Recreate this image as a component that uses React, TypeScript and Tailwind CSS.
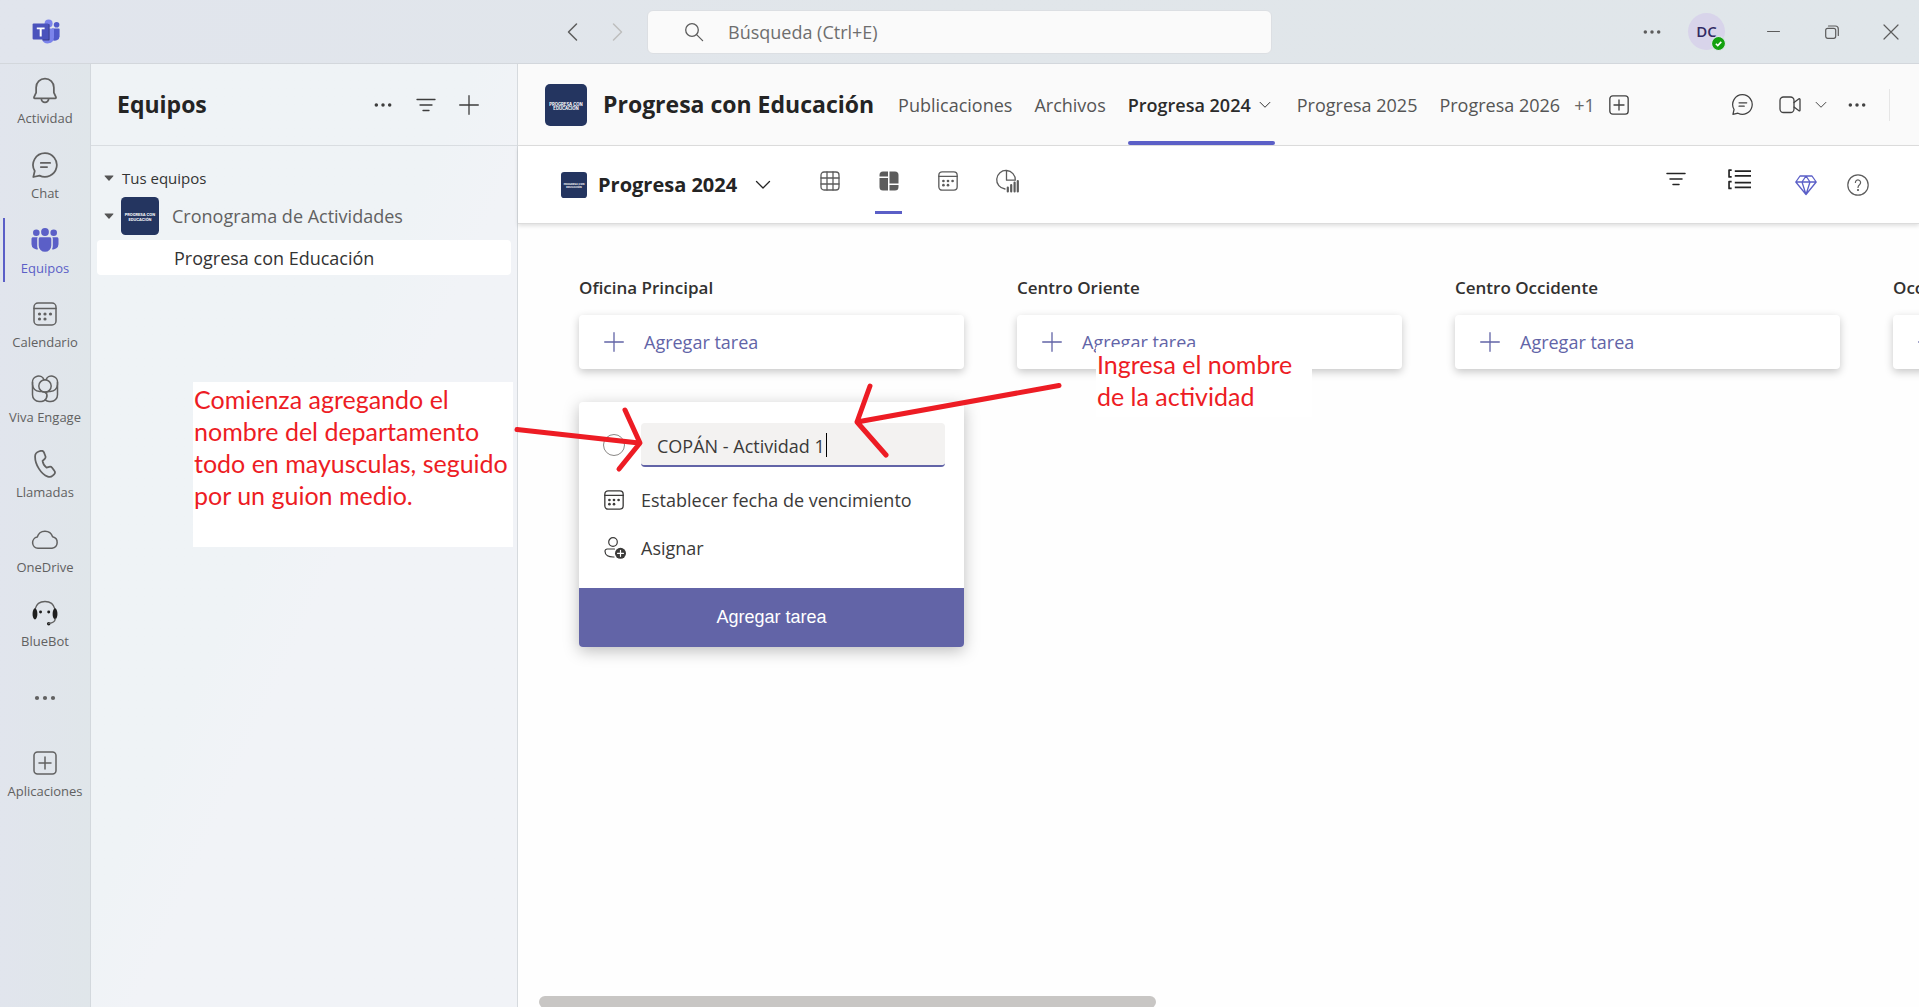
import type { ReactNode } from "react";

type IconProps = { className?: string };

function Svg({ children, box = 24, className = "", w = 1.5 }: { children: ReactNode; box?: number; className?: string; w?: number }) {
  return (
    <svg
      viewBox={`0 0 ${box} ${box}`}
      className={`shrink-0 ${className}`}
      fill="none"
      stroke="currentColor"
      strokeWidth={w}
      strokeLinecap="round"
      strokeLinejoin="round"
      aria-hidden="true"
    >
      {children}
    </svg>
  );
}

function TeamsLogo() {
  return (
    <svg viewBox="0 0 28 26" className="ml-8 h-[26px] w-7 shrink-0" role="img" aria-label="Microsoft Teams">
      <circle cx="24.6" cy="5.8" r="2.8" fill="#5059c9" />
      <path d="M20 9.6h6.6c.6 0 1 .4 1 1v6.6a4.6 4.6 0 0 1-7.6 3.4z" fill="#5059c9" />
      <circle cx="16.6" cy="4.6" r="4" fill="#7b83eb" />
      <path d="M10 9.6h11c.6 0 1 .4 1 1v8a6.2 6.2 0 0 1-12 1.8z" fill="#7b83eb" />
      <path d="M11 5h5.6c.6 0 1 .4 1 1v14.6c0 .6-.4 1-1 1H10.600z" fill="#3b3f8c" />
      <rect x="0.600" y="4.600" width="16" height="16" rx="1" fill="#4b53bc" />
      <path d="M4.800 8.400h7.800v1.800H9.700v7.400H7.700v-7.400H4.800z" fill="#fff" />
    </svg>
  );
}

const Bell = ({ className }: IconProps) => (
  <Svg className={className}>
    <path d="M12 2.200a7.600 7.600 0 0 0-7.600 7.600v4.400l-1.800 4c-.2.500.1 1 .6 1h17.600c.5 0 .8-.5.6-1l-1.800-4V9.800A7.600 7.600 0 0 0 12 2.200z" />
    <path d="M8.900 19.500a3.100 3.100 0 0 0 6.200 0" />
  </Svg>
);

const Chat = ({ className, w }: IconProps & { w?: number }) => (
  <Svg className={className} w={w}>
    <path d="M12 1.800a10.200 10.200 0 1 1-4.700 19.300l-5.300 1.200 1.200-5.100A10.200 10.200 0 0 1 12 1.800z" />
    <path d="M8.400 10.200h8M8.400 13.800h5.400" />
  </Svg>
);

const People = ({ className }: IconProps) => (
  <svg viewBox="0 0 28 24" className={`shrink-0 ${className}`} fill="currentColor" aria-hidden="true">
    <circle cx="14" cy="4" r="3.900" />
    <circle cx="5.300" cy="4.800" r="3.300" />
    <circle cx="22.700" cy="4.800" r="3.300" />
    <path d="M9.300 9.300h9.400c.9 0 1.600.7 1.600 1.600v6.600a6.300 6.300 0 0 1-12.600 0v-6.600c0-.9.700-1.600 1.600-1.600z" />
    <path d="M2.100 9.300h4.600a3 3 0 0 0-.5 1.600v7c0 1.200.3 2.400.9 3.400A5.400 5.400 0 0 1 .5 16.200v-5.300c0-.9.700-1.600 1.600-1.600z" />
    <path d="M25.900 9.300h-4.600c.3.500.5 1 .5 1.600v7c0 1.200-.3 2.400-.9 3.400a5.400 5.400 0 0 0 6.600-5.100v-5.300c0-.9-.7-1.600-1.600-1.600z" />
  </svg>
);

const Calendar = ({ className, w }: IconProps & { w?: number }) => (
  <Svg className={className} w={w}>
    <rect x="1" y="1" width="22" height="22" rx="4" />
    <path d="M1 6.500h22" />
    <g fill="currentColor" stroke="none">
      <circle cx="6.500" cy="12" r="1.600" />
      <circle cx="12" cy="12" r="1.600" />
      <circle cx="17.500" cy="12" r="1.600" />
      <circle cx="6.500" cy="17" r="1.600" />
      <circle cx="12" cy="17" r="1.600" />
    </g>
  </Svg>
);

const Viva = ({ className }: IconProps) => (
  <Svg className={className} box={28}>
    <circle cx="14" cy="11" r="6.200" />
    <path d="M1.500 8.500V7.500a6 6 0 0 1 11.600-2.600" />
    <path d="M26.500 8.500V7.500a6 6 0 0 0-11.600-2.600" />
    <path d="M1.500 7.500v12.300a6.600 6.600 0 0 0 6.600 6.700h1.700a5.800 5.800 0 0 0 5-9.300" />
    <path d="M26.500 7.500v12.300a6.600 6.600 0 0 1-6.600 6.700h-1.700a5.600 5.600 0 0 1-4-1.600" />
    <path d="M1.500 9.500c.3 4 3.300 6.600 7.300 6.900 2.800.2 4.700-.2 6 1.600" />
    <path d="M26.500 9.500c-.3 4-3.300 6.600-7.300 6.900-1.500.1-3 .1-4.300.6" />
  </Svg>
);

const Phone = ({ className }: IconProps) => (
  <Svg className={className}>
    <path d="M6.600 1.300 8.300.8a2.300 2.300 0 0 1 2.800 1.300l1.200 3a2.300 2.300 0 0 1-.6 2.600L9.900 9.300c.3 2 1.800 4.600 3.400 5.800l2.300-.7a2.300 2.300 0 0 1 2.500.8l1.900 2.600c.7.900.6 2.200-.2 3l-1.200 1.200a4 4 0 0 1-4.200.8C8.500 20.700 3.500 12.300 3.500 5.700a4.600 4.600 0 0 1 3.100-4.400z" />
  </Svg>
);

const Cloud = ({ className }: IconProps) => (
  <Svg className={className} box={28}>
    <path d="M7 23.300a5.700 5.700 0 0 1-.7-11.300 8 8 0 0 1 15.300-.3A5.900 5.900 0 0 1 21 23.300z" />
  </Svg>
);

const Headset = ({ className }: IconProps) => (
  <Svg className={className} box={28} w={1.400}>
    <path d="M3.200 10C4.500 4.800 8.500 1.600 14 1.600S23.500 4.800 24.800 10" />
    <g className="text-[#1f1f1f]" fill="currentColor" stroke="none">
      <ellipse cx="3.200" cy="15" rx="2.600" ry="6" />
      <ellipse cx="24.800" cy="15" rx="2.600" ry="6" />
      <circle cx="9.200" cy="13" r="1.600" />
      <circle cx="18" cy="13" r="1.600" />
      <circle cx="18" cy="25.600" r="1.900" />
    </g>
    <path d="M25 20c0 3-3 4.900-7 5.200" />
  </Svg>
);

const Dots = ({ className }: IconProps) => (
  <svg viewBox="0 0 24 24" className={`shrink-0 ${className}`} fill="currentColor" aria-hidden="true">
    <circle cx="4" cy="12" r="2.100" />
    <circle cx="12" cy="12" r="2.100" />
    <circle cx="20" cy="12" r="2.100" />
  </svg>
);

const PlusBox = ({ className, w }: IconProps & { w?: number }) => (
  <Svg className={className} w={w}>
    <rect x="1" y="1" width="22" height="22" rx="3.500" />
    <path d="M12 6v12M6 12h12" />
  </Svg>
);

const Plus = ({ className }: IconProps) => (
  <Svg className={className} box={20} w={1.300}>
    <path d="M10 .7v18.600M.7 10h18.600" />
  </Svg>
);

const Filter = ({ className, w = 1.500 }: IconProps & { w?: number }) => (
  <Svg className={className} box={20} w={w}>
    <path d="M1 4.500h18M4 10h12M7 15.500h6" />
  </Svg>
);

const Chevron = ({ className }: IconProps) => (
  <Svg className={className} box={16} w={1.300}>
    <path d="m1.500 4.500 6.500 6.500 6.500-6.500" />
  </Svg>
);

const Arrow = ({ left, className }: IconProps & { left?: boolean }) => (
  <Svg className={className} box={20} w={1.500}>
    <path d={left ? "m13.500 2-8 8 8 8" : "m6.500 2 8 8-8 8"} />
  </Svg>
);

const Triangle = () => (
  <svg viewBox="0 0 10 8" className="h-2 w-2.5 shrink-0 text-[#555]" fill="currentColor" aria-hidden="true">
    <path d="M1 1.500h8c.4 0 .6.500.3.800L5.500 6.600c-.3.300-.7.300-1 0L.7 2.300C.4 2 .6 1.500 1 1.500z" />
  </svg>
);

function TeamTile({ className }: IconProps) {
  return (
    <svg viewBox="0 0 42 42" className={`shrink-0 ${className}`} role="img" aria-label="Progresa con Educación">
      <rect width="42" height="42" rx="5" fill="#243560" />
      <text x="21" y="21.500" textAnchor="middle" fill="#fff" fontFamily="Inter" fontWeight="700" fontSize="4.200">
        PROGRESA CON
      </text>
      <text x="21" y="26" textAnchor="middle" fill="#fff" fontFamily="Inter" fontWeight="700" fontSize="4.200">
        EDUCACIÓN
      </text>
    </svg>
  );
}

function TopBar() {
  return (
    <header className="flex h-16 shrink-0 items-center border-b border-[#d3d7dc] bg-linear-to-r from-[#e1e5ed] via-[#e1e6ea] to-[#e0e6ea] text-[#5c5c5c]">
      <div className="flex flex-1 items-center justify-between">
        <TeamsLogo />
        <div className="mr-5 flex items-center gap-6">
          <button aria-label="Atrás"><Arrow left className="size-5" /></button>
          <button aria-label="Adelante" className="text-[#bdbdbd]"><Arrow className="size-5" /></button>
        </div>
      </div>
      <label className="flex h-11 w-[625px] items-center gap-6 rounded-md border border-[#dcdfe3] bg-[#fafafa] pl-9">
        <Svg box={20} w={1.300} className="size-5">
          <circle cx="8" cy="8" r="6.300" />
          <path d="m12.600 12.600 6 6" />
        </Svg>
        <input
          type="search"
          aria-label="Búsqueda"
          placeholder="Búsqueda (Ctrl+E)"
          className="w-full bg-transparent text-lg outline-none placeholder:text-[#6e6e6e]"
        />
      </label>
      <div className="flex flex-1 items-center justify-end">
        <button aria-label="Configuración y más" className="mr-[26px]"><Dots className="size-5" /></button>
        <button aria-label="Perfil de DC" className="relative mr-[42px] flex size-[37px] items-center justify-center rounded-full bg-[#d8d4ea] text-[15px] font-semibold text-[#312a63]">
          DC
          <svg viewBox="0 0 14 14" className="absolute -right-px -bottom-px size-[15px]" aria-hidden="true">
            <circle cx="7" cy="7" r="6.500" fill="#13a10e" stroke="#e1e6ec" />
            <path d="m4.500 7.200 1.800 1.700 3.300-3.400" fill="none" stroke="#fff" strokeWidth="1.500" />
          </svg>
        </button>
        <button aria-label="Minimizar" className="mr-[45px]">
          <Svg box={13} w={1} className="size-[13px]"><path d="M.5 6.500h12" /></Svg>
        </button>
        <button aria-label="Restaurar" className="mr-11">
          <Svg box={14} w={1.200} className="size-3.5">
            <rect x=".7" y="3.300" width="10" height="10" rx="2" />
            <path d="M3.500 1h6.800a3 3 0 0 1 3 3v6.500" />
          </Svg>
        </button>
        <button aria-label="Cerrar" className="mr-5">
          <Svg box={16} w={1.200} className="size-4"><path d="m1 1 14 14M15 1 1 15" /></Svg>
        </button>
      </div>
    </header>
  );
}

function RailItem({ label, icon, active }: { label: string; icon: ReactNode; active?: boolean }) {
  return (
    <li className="relative">
      {active && <span className="absolute top-1 left-[3px] h-16 w-0.5 bg-[#5b5fc7]" />}
      <button className={`flex w-full flex-col items-center gap-1 pt-3 text-[13px] leading-5 ${active ? "text-[#5b5fc7]" : "text-[#616161]"}`}>
        <span className="flex h-7 items-center">{icon}</span>
        {label}
      </button>
    </li>
  );
}

function Rail() {
  return (
    <nav className="w-[91px] shrink-0 border-r border-[#d3d8dd] bg-linear-to-r from-[#e1e5ed] to-[#e0e6ea]">
      <ul className="grid h-[598px] auto-rows-fr">
        <RailItem label="Actividad" icon={<Bell className="size-7" />} />
        <RailItem label="Chat" icon={<Chat className="size-7" />} />
        <RailItem label="Equipos" active icon={<People className="h-6 w-7" />} />
        <RailItem label="Calendario" icon={<Calendar className="size-6" />} />
        <RailItem label="Viva Engage" icon={<Viva className="size-7" />} />
        <RailItem label="Llamadas" icon={<Phone className="size-7" />} />
        <RailItem label="OneDrive" icon={<Cloud className="size-7" />} />
        <RailItem label="BlueBot" icon={<Headset className="size-[26px]" />} />
      </ul>
      <button aria-label="Más aplicaciones" className="flex w-full justify-center pt-6 pb-[27px] text-[#616161]">
        <Dots className="size-6" />
      </button>
      <ul>
        <RailItem label="Aplicaciones" icon={<PlusBox className="size-6" />} />
      </ul>
    </nav>
  );
}

function TeamsPanel() {
  return (
    <aside className="w-[427px] shrink-0 border-r border-[#d6dade] bg-linear-to-br from-[#eff3f6] from-45% to-[#f1f3f7] to-55%">
      <div className="flex h-[82px] items-center border-b border-[#d9dde1] pr-[38px] pl-[26px] text-[#3d3d3d]">
        <h1 className="flex-1 text-[23px] font-bold text-[#242424]">Equipos</h1>
        <div className="flex items-center gap-[23px]">
          <button aria-label="Más opciones"><Dots className="size-5" /></button>
          <button aria-label="Filtrar"><Filter w={1.300} className="size-5" /></button>
          <button aria-label="Unirse a un equipo o crear uno"><Plus className="size-5" /></button>
        </div>
      </div>
      <div className="px-1.5 pt-[18px]">
        <button className="flex h-7 w-full items-center gap-2 pl-[7px] text-[15px] text-[#333]">
          <Triangle />
          Tus equipos
        </button>
        <button className="flex h-12 w-full items-center pl-[7px] text-lg text-[#616161]">
          <Triangle />
          <TeamTile className="ml-[7px] size-[38px]" />
          <span className="pl-[13px]">Cronograma de Actividades</span>
        </button>
        <a href="#canal" className="flex h-[35px] items-center rounded bg-white pl-[77px] text-lg text-[#333]">
          Progresa con Educación
        </a>
      </div>
    </aside>
  );
}

function TeamHeader() {
  return (
    <div className="flex h-[82px] shrink-0 items-stretch border-b border-[#dedede] bg-[#fafafa] pl-[27px] text-[#424242]">
      <div className="flex items-center gap-4">
        <TeamTile className="size-[42px]" />
        <h2 className="text-[23px] font-bold whitespace-nowrap text-[#242424]">Progresa con Educación</h2>
      </div>
      <nav className="ml-6 flex items-center gap-[22px] text-lg whitespace-nowrap text-[#555]">
        <a href="#publicaciones">Publicaciones</a>
        <a href="#archivos">Archivos</a>
        <a href="#progresa-2024" aria-current="page" className="relative flex h-full items-center gap-2 font-semibold text-[#2b2b2b]">
          Progresa 2024
          <Chevron className="mr-1 size-3" />
          <span className="absolute bottom-0 left-0 h-1 w-full rounded-sm bg-[#5b5fc7]" />
        </a>
        <a href="#progresa-2025">Progresa 2025</a>
        <a href="#progresa-2026">Progresa 2026</a>
      </nav>
      <button className="ml-3.5 text-lg text-[#666]">+1</button>
      <button aria-label="Agregar una pestaña" className="ml-3.5"><PlusBox w={1.600} className="size-5" /></button>
      <div className="ml-auto flex items-center pr-[29px]">
        <button aria-label="Conversación" className="mr-[25px]"><Chat w={1.300} className="size-[23px]" /></button>
        <button aria-label="Reunirse ahora" className="mr-3.5">
          <Svg box={22} w={1.300} className="size-[22px]">
            <rect x="1" y="3" width="14" height="15.500" rx="3.500" />
            <path d="m15 8.500 5-3.700c.4-.3 1 0 1 .5v11c0 .5-.6.800-1 .5l-5-3.700" />
          </Svg>
        </button>
        <button aria-label="Opciones de reunión" className="mr-5"><Chevron className="size-3" /></button>
        <button aria-label="Más opciones" className="mr-[22px]"><Dots className="size-5" /></button>
        <span className="h-8 w-px bg-[#e6e6e6]" />
      </div>
    </div>
  );
}

function ViewButton({ label, active, children }: { label: string; active?: boolean; children: ReactNode }) {
  return (
    <button aria-label={label} className="relative flex h-full w-[27px] items-center justify-center pb-2 text-[#5c5c5c]">
      {children}
      {active && <span className="absolute bottom-2.5 left-0 h-[3px] w-full bg-[#5b5fc7]" />}
    </button>
  );
}

function PlanToolbar() {
  return (
    <div className="z-10 flex h-[78px] shrink-0 items-center border-b border-[#dcdcdc] bg-white pr-[50px] pl-[43px] shadow-[0_2px_4px_rgba(0,0,0,0.12)]">
      <button className="flex items-center text-xl font-bold whitespace-nowrap text-[#242424]">
        <TeamTile className="mr-[11px] size-[26px]" />
        Progresa 2024
        <Chevron className="ml-[18px] size-4" />
      </button>
      <div className="ml-[45px] flex h-[78px] items-center gap-8">
        <ViewButton label="Cuadrícula">
          <Svg box={20} w={1.300} className="size-5">
            <rect x="1" y="1" width="18" height="18" rx="3" />
            <path d="M7 1v18M13 1v18M1 7h18M1 13h18" />
          </Svg>
        </ViewButton>
        <ViewButton label="Panel" active>
          <svg viewBox="0 0 20 20" className="size-5" fill="currentColor" aria-hidden="true">
            <path d="M4 .5h5v5H.5V4A3.500 3.500 0 0 1 4 .5zM.5 7H9v12.500H4A3.500 3.500 0 0 1 .5 16zM10.500.5H16A3.500 3.500 0 0 1 19.500 4v8.500h-9zM10.500 14h9v2a3.500 3.500 0 0 1-3.500 3.500h-5.500z" />
          </svg>
        </ViewButton>
        <ViewButton label="Programación"><Calendar w={1.600} className="size-5" /></ViewButton>
        <ViewButton label="Gráficos">
          <Svg box={24} w={1.300} className="size-6">
            <path d="M10 20A9.300 9.300 0 1 1 20.300 11.200H11.500V1.500" />
            <path d="M12.800 22.500v-4M16.200 22.500v-6.500M19.600 22.500v-9M22.800 22.500V12" strokeWidth="2.200" />
          </Svg>
        </ViewButton>
      </div>
      <div className="ml-auto flex items-center text-[#242424]">
        <button aria-label="Filtros" className="mr-[42px] pb-3"><Filter className="size-5" /></button>
        <button aria-label="Agrupar por" className="mr-11 pb-2.5">
          <Svg box={22} w={1.600} className="size-[23px]">
            <path d="M3.500 2H1v6.500h2.500M3.500 13H1v6.500h2.500M6.500 3H22M6.500 7.500H22M6.500 14H22M6.500 18.500H22" strokeLinecap="butt" />
          </Svg>
        </button>
        <button aria-label="Premium" className="mr-[30px] text-[#5b5fc7]">
          <Svg box={22} w={1.300} className="size-[22px]">
            <path d="M5 2h12l4.200 6L11 20.500.8 8zM.8 8h20.400M11 2 7 8l4 12.500L15 8z" />
          </Svg>
        </button>
        <button aria-label="Ayuda" className="text-[#5c5c5c]">
          <Svg box={22} w={1.200} className="size-[22px]">
            <circle cx="11" cy="11" r="10.200" />
            <path d="M8.400 8.500a2.600 2.600 0 1 1 4.300 2c-1 .8-1.700 1.400-1.700 3" />
            <circle cx="11" cy="16" r=".5" fill="currentColor" />
          </Svg>
        </button>
      </div>
    </div>
  );
}

function NewTaskForm() {
  return (
    <form className="mt-[33px] overflow-hidden rounded-sm bg-white text-[#3b3a39] shadow-[0_4px_16px_rgba(0,0,0,0.26)]">
      <div className="flex flex-col px-5 pt-[21px] pb-4">
        <div className="flex items-center pl-1">
          <span className="size-[22px] rounded-full border border-[#8a8886]" />
          <div className="relative mr-[-1px] ml-4 flex-1">
            <input
              aria-label="Nombre de la tarea"
              defaultValue="COPÁN - Actividad 1"
              className="h-11 w-full rounded-sm border-b-2 border-[#6264a7] bg-[#f3f2f1] pt-1 pl-4 text-lg outline-none"
            />
            <span className="absolute top-2.5 left-[185px] h-6 w-px bg-black" />
          </div>
        </div>
        <button type="button" className="mt-[9px] flex h-12 items-center gap-[17px] pl-[5px] text-lg">
          <Calendar w={1.600} className="size-5" />
          Establecer fecha de vencimiento
        </button>
        <button type="button" className="flex h-12 items-center gap-[15px] pl-[5px] text-lg">
          <Svg box={22} w={1.200} className="size-[22px]">
            <circle cx="9" cy="5" r="4.300" />
            <path d="M10.500 12H3.200A2.200 2.200 0 0 0 1 14.200c0 4.300 3.600 6 9 5.800" />
            <circle cx="16.500" cy="16.300" r="5.500" fill="currentColor" stroke="none" />
            <path d="M16.500 13.300v6M13.500 16.300h6" stroke="#fff" />
          </Svg>
          Asignar
        </button>
      </div>
      <button type="button" className="h-[59px] w-full bg-[#6264a7] pb-0.5 font-['Liberation_Sans',Arial,sans-serif] text-lg text-white">
        Agregar tarea
      </button>
    </form>
  );
}

function Column({ title, children }: { title: string; children?: ReactNode }) {
  return (
    <section className="w-[385px] shrink-0">
      <h3 className="text-[17px] leading-6 font-semibold text-[#323130]">{title}</h3>
      <button className="mt-[15px] flex h-[54px] w-full items-center gap-5 rounded-sm bg-white pl-[25px] text-lg text-[#6264a7] shadow-[0_3px_9px_rgba(0,0,0,0.22)]">
        <Plus className="size-5" />
        Agregar tarea
      </button>
      {children}
    </section>
  );
}

function Note({ className, lines }: { className: string; lines: string[] }) {
  return (
    <p className={`absolute z-20 bg-white pt-px pl-px font-[Lato,'Open_Sans',sans-serif] text-[25px] leading-8 whitespace-nowrap text-[#ed1c24] ${className}`}>
      {lines.map((line) => (
        <span key={line} className="block">{line}</span>
      ))}
    </p>
  );
}

export default function App() {
  return (
    <div className="relative flex h-screen flex-col overflow-hidden bg-white font-['Open_Sans','Noto_Sans',sans-serif]">
      <TopBar />
      <div className="flex min-h-0 flex-1">
        <Rail />
        <TeamsPanel />
        <main className="flex min-w-0 flex-1 flex-col">
          <TeamHeader />
          <PlanToolbar />
          <div className="flex min-h-0 flex-1 gap-[53px] overflow-hidden bg-[#fefefe] pt-[52px] pl-[61px]">
            <Column title="Oficina Principal">
              <NewTaskForm />
            </Column>
            <Column title="Centro Oriente" />
            <Column title="Centro Occidente" />
            <Column title="Occidente" />
          </div>
          <div className="h-[11px] shrink-0 overflow-hidden bg-[#fefefe] px-[21px]">
            <div className="h-3 w-[617px] rounded-full bg-[#c8c6c4]" />
          </div>
        </main>
      </div>

      <Note
        className="top-[382px] left-[193px] h-[165px] w-80"
        lines={["Comienza agregando el", "nombre del departamento", "todo en mayusculas, seguido", "por un guion medio."]}
      />
      <Note className="top-[347px] left-[1096px] h-[70px] w-[216px]" lines={["Ingresa el nombre", "de la actividad"]} />
      <svg
        viewBox="510 370 560 110"
        className="pointer-events-none absolute top-[370px] left-[510px] z-20 h-[110px] w-[560px]"
        fill="none"
        stroke="#ed1c24"
        strokeWidth="5"
        strokeLinecap="round"
        strokeLinejoin="round"
        aria-hidden="true"
      >
        <path d="M517 429.500 639 443M625 410l15 33-21 26" />
        <path d="M1059 385.500 857 422M870 386l-13 36 29 33" />
      </svg>
    </div>
  );
}
